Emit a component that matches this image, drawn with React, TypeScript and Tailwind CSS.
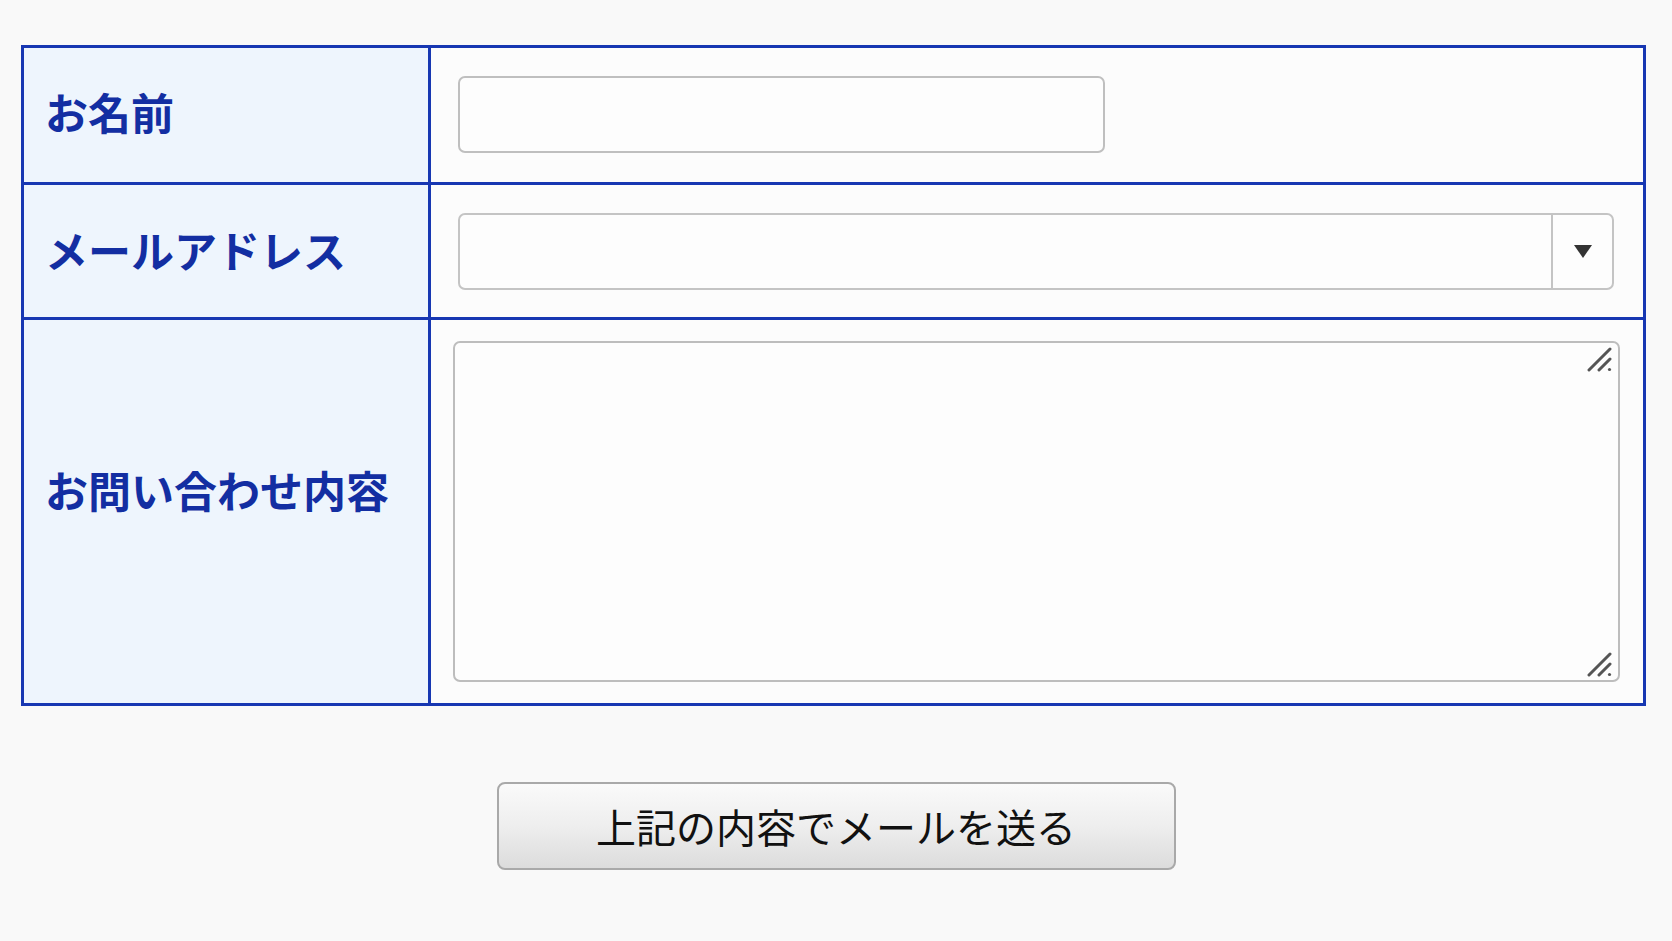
import React from "react";

const jp = { fontFamily: '"Noto Sans CJK JP", "Noto Sans", sans-serif' };

function ResizeGrip() {
  return (
    <svg width="26" height="25" viewBox="0 0 26 25" className="block">
      <line x1="2" y1="23" x2="23" y2="2" stroke="#555" strokeWidth="3" strokeLinecap="round" />
      <line x1="12" y1="23" x2="23" y2="12" stroke="#555" strokeWidth="3" strokeLinecap="round" />
      <circle cx="22.5" cy="22.5" r="1.6" fill="#555" />
    </svg>
  );
}

function Label({ children, className = "" }: { children: React.ReactNode; className?: string }) {
  return (
    <div className={`flex items-center bg-[#eef5fd] pl-[21px] border-r-[3px] border-[#1737b2] ${className}`}>
      <span className="text-[43px] font-bold text-[#132ea2] leading-none" style={jp}>
        {children}
      </span>
    </div>
  );
}

export default function App() {
  return (
    <div className="min-h-[941px] w-full bg-[#f9f9f9]" style={jp}>
      <div className="pt-[45px] pl-[21px]">
        <div className="w-[1625px] border-[3px] border-[#1737b2] bg-[#fcfcfc]">
          {/* name */}
          <div className="grid grid-cols-[407px_1fr] h-[137px] border-b-[3px] border-[#1737b2]">
            <Label className="pb-[7px]">お名前</Label>
            <div className="flex items-center pl-[27px] pb-[2px]">
              <input
                type="text"
                className="w-[647px] h-[77px] rounded-[7px] border-2 border-[#bfbfbf] bg-[#fdfdfd] outline-none"
              />
            </div>
          </div>

          {/* email */}
          <div className="grid grid-cols-[407px_1fr] h-[135px] border-b-[3px] border-[#1737b2]">
            <Label className="pb-[4px]">メールアドレス</Label>
            <div className="flex items-center pl-[27px]">
              <div className="flex w-[1156px] h-[77px] rounded-[7px] border-2 border-[#c4c4c4] bg-[#fdfdfd]">
                <div className="flex-1" />
                <div className="w-[61px] border-l-2 border-[#c4c4c4] flex items-center justify-center">
                  <svg width="18" height="13" viewBox="0 0 18 13">
                    <polygon points="0,0 18,0 9,13" fill="#333" />
                  </svg>
                </div>
              </div>
            </div>
          </div>

          {/* message */}
          <div className="grid grid-cols-[407px_1fr] h-[383px]">
            <Label className="pb-[44px]">お問い合わせ内容</Label>
            <div className="pl-[22px] pr-[23px] pt-[21px] pb-[21px]">
              <div className="relative h-full w-full rounded-[7px] border-2 border-[#bdbdbd] bg-[#fdfdfd]">
                <div className="absolute right-[5px] top-[4px]">
                  <ResizeGrip />
                </div>
                <div className="absolute right-[5px] bottom-[3px]">
                  <ResizeGrip />
                </div>
              </div>
            </div>
          </div>
        </div>
      </div>

      <div className="flex justify-center pt-[76px]">
        <button
          type="button"
          className="w-[679px] h-[88px] rounded-[8px] border-2 border-[#a9a9a9] bg-gradient-to-b from-[#fafafa] via-[#eeeeee] to-[#dcdcdc] text-[40px] text-[#111] leading-none"
          style={jp}
        >
          上記の内容でメールを送る
        </button>
      </div>
    </div>
  );
}
